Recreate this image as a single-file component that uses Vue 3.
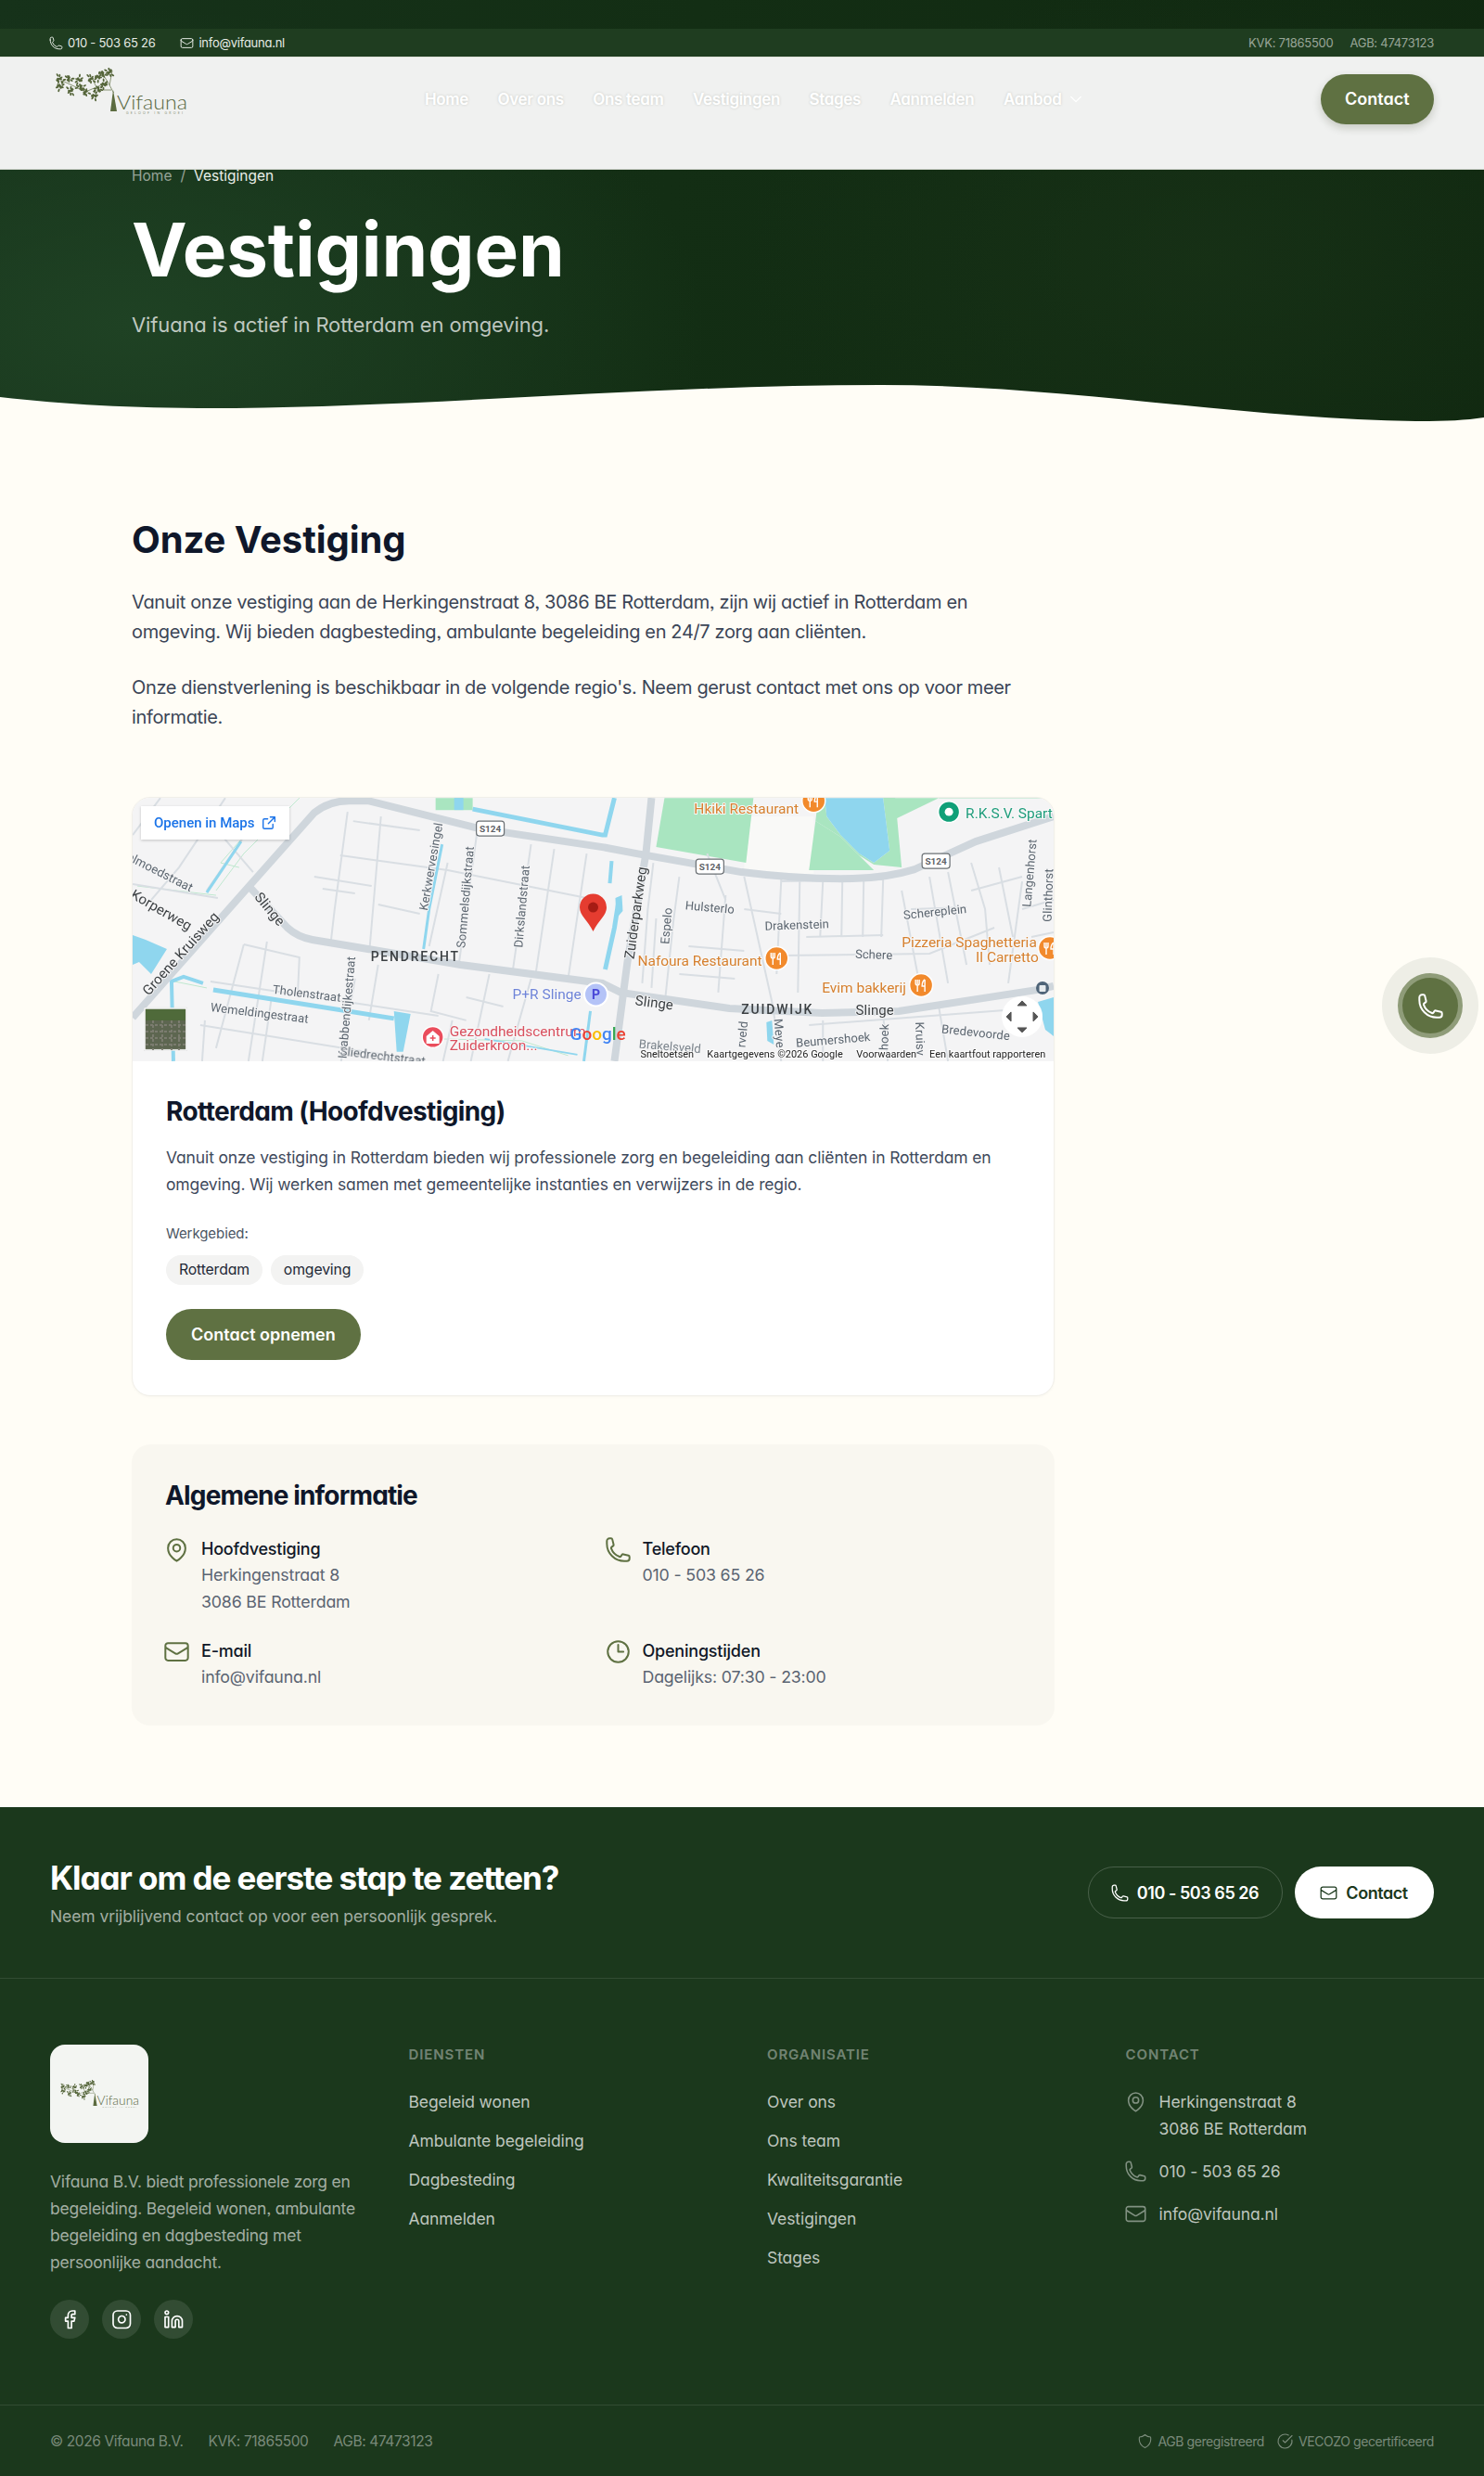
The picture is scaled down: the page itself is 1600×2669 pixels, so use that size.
<script setup>
const icons = {
  phone: 'M2.25 6.75c0 8.284 6.716 15 15 15h2.25a2.25 2.25 0 0 0 2.25-2.25v-1.372c0-.516-.351-.966-.852-1.091l-4.423-1.106c-.44-.11-.902.055-1.173.417l-.97 1.293c-.282.376-.769.542-1.21.38a12.035 12.035 0 0 1-7.143-7.143c-.162-.441.004-.928.38-1.21l1.293-.97c.363-.271.527-.734.417-1.173L6.963 3.102a1.125 1.125 0 0 0-1.091-.852H4.5A2.25 2.25 0 0 0 2.25 4.5v2.25Z',
  mail: 'M21.75 6.75v10.5a2.25 2.25 0 0 1-2.25 2.25h-15a2.25 2.25 0 0 1-2.25-2.25V6.75m19.5 0A2.25 2.25 0 0 0 19.5 4.5h-15a2.25 2.25 0 0 0-2.25 2.25m19.5 0v.243a2.25 2.25 0 0 1-1.07 1.916l-7.5 4.615a2.25 2.25 0 0 1-2.36 0L3.32 8.91a2.25 2.25 0 0 1-1.07-1.916V6.75',
  pin: 'M15 10.5a3 3 0 1 1-6 0 3 3 0 0 1 6 0ZM19.5 10.5c0 7.142-7.5 11.25-7.5 11.25S4.5 17.642 4.5 10.5a7.5 7.5 0 1 1 15 0Z',
  clock: 'M12 6v6h4.5m4.5 0a9 9 0 1 1-18 0 9 9 0 0 1 18 0Z',
  chevron: 'm19.5 8.25-7.5 7.5-7.5-7.5',
  shield: 'M12 2.7c2.2 2 5 3.2 8 3.3.2 1 .3 2 .3 3 0 5.8-3.4 10-8.3 12.3C7.1 19 3.7 14.800 3.700 9c0-1 .1-2 .3-3 3-.1 5.800-1.300 8-3.300Z',
  check: 'M21.801 10A10 10 0 1 1 17 3.335M9 11l3 3L22 4',
  facebook: 'M18 2h-3a5 5 0 0 0-5 5v3H7v4h3v8h4v-8h3l1-4h-4V7a1 1 0 0 1 1-1h3z',
  instagram: 'M7 2h10a5 5 0 0 1 5 5v10a5 5 0 0 1-5 5H7a5 5 0 0 1-5-5V7a5 5 0 0 1 5-5ZM16 11.37A4 4 0 1 1 12.63 8 4 4 0 0 1 16 11.37ZM17.5 6.500h.01',
  linkedin: 'M16 8a6 6 0 0 1 6 6v7h-4v-7a2 2 0 0 0-2-2 2 2 0 0 0-2 2v7h-4v-7a6 6 0 0 1 6-6zM2 9h4v12H2zM6 4a2 2 0 1 1-4 0 2 2 0 0 1 4 0Z',
  external: 'M14 3h7v7M21 3l-10 10M18 14v5a2 2 0 0 1-2 2H5a2 2 0 0 1-2-2V8a2 2 0 0 1 2-2h5',
}

const navLinks = ['Home', 'Over ons', 'Ons team', 'Vestigingen', 'Stages', 'Aanmelden']
const diensten = ['Begeleid wonen', 'Ambulante begeleiding', 'Dagbesteding', 'Aanmelden']
const organisatie = ['Over ons', 'Ons team', 'Kwaliteitsgarantie', 'Vestigingen', 'Stages']
const socials = ['facebook', 'instagram', 'linkedin']

// leaves of the logo tree, clustered round the branch ends
const clusters = [[24, 24], [25, 32], [34, 24], [36, 37], [45, 25], [47, 33], [58, 24], [66, 22], [71, 19], [78, 17], [72, 30], [66, 35], [52, 38], [62, 42]]
const leaves = []
clusters.forEach(([cx, cy], c) => {
  for (let i = 0; i < 10; i++) {
    const a = (i * 2.4 + c) % 6.28
    const d = 1 + (i % 4) * 1.2
    leaves.push({ x: cx + Math.cos(a) * d, y: cy + Math.sin(a) * d, r: (a * 57) | 0 })
  }
})

const mainRoads = [
  'M0 237 L124 97 L196 16 Q212 3 234 3 L254 3 L374 33 L507 53 L544 60 L657 80 Q720 88 777 87 Q815 86 844 77 L910 47 L994 20',
  'M127 97 L167 140 Q178 150 194 153 L254 163 L354 180 L507 200 L527 210 L644 227 L744 232 L827 230 L977 207 L994 203',
  'M560 0 L554 60 L534 177 L520 284',
]
const streets = [
  'M30 0 L0 40', 'M100 0 L50 75 L20 110', 'M70 10 L130 80', 'M0 93 L92 108', 'M118 45 L80 100',
  'M232 15 L218 120 L214 155', 'M268 20 L256 160', 'M224 62 L340 78 L500 110', 'M196 85 L258 95', 'M205 98 L240 103', 'M238 25 L310 35',
  'M340 70 L320 160', 'M372 35 L352 180', 'M430 50 L410 188', 'M490 60 L470 195', 'M455 55 L435 190', 'M265 115 L310 125',
  'M120 158 L90 270', 'M145 155 L125 284', 'M120 158 L180 172 L178 215', 'M84 198 L330 235', 'M78 240 L75 284', 'M73 245 L290 280', 'M150 215 L140 284', 'M265 180 L255 240', 'M240 195 L225 284',
  'M330 190 L322 230 L360 240', 'M385 190 L365 284', 'M430 195 L405 284', 'M345 240 L335 284', 'M360 215 L400 225',
  'M562 70 L556 120 L550 200', 'M590 85 L584 130 L575 215', 'M640 105 L632 210', 'M660 85 L690 220', 'M700 88 L695 190 M720 90 L718 210 M745 90 L742 150 M766 90 L765 150 M789 90 L788 150 M810 88 L808 150',
  'M700 90 L810 88', 'M660 120 L700 125', 'M700 170 L860 168 L930 140', 'M727 150 L810 148', 'M830 100 L850 205', 'M860 85 L880 200', 'M880 80 L900 180', 'M905 70 L920 120 L925 180',
  'M840 120 L900 118', 'M905 100 L960 85', 'M935 75 L950 150', 'M960 90 L945 200', 'M560 205 L565 130', 'M600 160 L660 165', 'M590 190 L650 195', 'M690 220 L700 284', 'M745 240 L745 284', 'M810 235 L815 284', 'M870 225 L880 284',
  'M730 245 L994 225', 'M960 120 L994 110', 'M970 150 L994 145', 'M620 60 L640 110',
]
const thinGreen = ['M5 95 L90 105', 'M90 100 L120 60 L180 0', 'M115 75 L95 70 L130 30', 'M330 260 L420 262 L470 278', 'M45 198 L80 205', 'M870 0 L1000 0']
const canals = [
  { d: 'M87 207 L282 238', w: 5 }, { d: 'M44 284 L42 198 L55 193 L76 200', w: 4 }, { d: 'M80 102 L117 47', w: 3 },
  { d: 'M334 50 L320 120 L314 163', w: 3 }, { d: 'M367 12 L507 40 L510 40 L520 0', w: 5 }, { d: 'M525 108 L520 140 L510 185', w: 5 },
  { d: 'M517 68 L515 92', w: 4 }, { d: 'M494 230 L487 284', w: 3 }, { d: 'M380 260 L480 277', w: 2 },
]
const waterAreas = [
  '0,148 14,153 37,163 20,190 7,177 0,180', '282,230 300,233 292,274 285,274', '347,0 357,0 357,13 347,13',
  '747,0 810,0 817,57 800,70 784,60 764,40 749,20', '521,108 528,105 529,122 522,130', '684,242 690,240 692,266 685,262', '977,220 994,215 994,257 985,250',
]
const greenAreas = [
  '574,0 670,0 662,70 565,53', '737,25 764,42 784,62 800,72 830,75 823,0 810,0 817,57 800,70 784,60 764,40 749,20 747,0 740,0', '737,25 730,78 800,78 764,42',
  '810,0 870,0 825,22', '327,0 367,0 367,13 327,13',
]
const labels = [
  { t: 'Velmoedstraat', x: 26, y: 78, r: 27, s: 13 },
  { t: 'Korperweg', x: 31, y: 121, r: 30, s: 15, c: '#3c4043' },
  { t: 'Groene Kruisweg', x: 52, y: 168, r: -48, s: 15, c: '#3c4043' },
  { t: 'Slinge', x: 148, y: 120, r: 50, s: 15, c: '#3c4043' },
  { t: 'Kerkwervesingel', x: 322, y: 74, r: -80, s: 13 },
  { t: 'Sommelsdijkstraat', x: 359, y: 107, r: -85, s: 13 },
  { t: 'Dirkslandstraat', x: 420, y: 117, r: -85, s: 13 },
  { t: 'Tholenstraat', x: 188, y: 211, r: 7, s: 13 },
  { t: 'Wemeldingestraat', x: 137, y: 232, r: 7, s: 13 },
  { t: 'Krabbendijkestraat', x: 231, y: 226, r: -85, s: 13 },
  { t: 'Sliedrechtstraat', x: 270, y: 279, r: 7, s: 13 },
  { t: 'Zuiderparkweg', x: 543, y: 124, r: -82, s: 15, c: '#3c4043' },
  { t: 'Espelo', x: 576, y: 138, r: -85, s: 13 },
  { t: 'Hulsterlo', x: 623, y: 118, r: 5, s: 13 },
  { t: 'Drakenstein', x: 717, y: 137, r: -2, s: 13 },
  { t: 'Schereplein', x: 866, y: 123, r: -6, s: 13 },
  { t: 'Langenhorst', x: 968, y: 81, r: -85, s: 13 },
  { t: 'Glinthorst', x: 988, y: 105, r: -88, s: 13 },
  { t: 'Schere', x: 800, y: 169, r: 2, s: 13 },
  { t: 'Slinge', x: 563, y: 221, r: 7, s: 15, c: '#3c4043' },
  { t: 'Slinge', x: 801, y: 229, r: 0, s: 15, c: '#3c4043' },
  { t: 'Beumershoek', x: 756, y: 261, r: -5, s: 13 },
  { t: 'Bredevoorde', x: 910, y: 253, r: 6, s: 13 },
  { t: 'Kruisv', x: 850, y: 260, r: 88, s: 13 },
  { t: 'Meye', x: 698, y: 254, r: 85, s: 13 },
  { t: 'rveld', x: 658, y: 255, r: -85, s: 13 },
  { t: 'hoek', x: 811, y: 258, r: -88, s: 13 },
]
const places = [
  { t: 'Hkiki Restaurant', x: 606, y: 12, c: '#d6802f' },
  { t: 'Nafoura Restaurant', x: 545, y: 176, c: '#d6802f' },
  { t: 'Evim bakkerij', x: 744, y: 205, c: '#d6802f' },
  { t: 'Pizzeria Spaghetteria', x: 830, y: 156, c: '#d6802f' },
  { t: 'Il Carretto', x: 910, y: 172, c: '#d6802f' },
  { t: 'P+R Slinge', x: 410, y: 212, c: '#6f84d8' },
  { t: 'Gezondheidscentrum', x: 342, y: 252, c: '#d9505f' },
  { t: 'Zuiderkroon...', x: 342, y: 267, c: '#d9505f' },
  { t: 'R.K.S.V. Spart', x: 899, y: 17, c: '#1f9d7c' },
]
const food = [[735, 3], [695, 173], [851, 202], [990, 162]]
const shields = [[386, 33], [623, 74], [867, 68]]
const attribution = [
  { t: 'Sneltoetsen', x: 548 }, { t: 'Kaartgegevens ©2026 Google', x: 620 }, { t: 'Voorwaarden', x: 781 }, { t: 'Een kaartfout rapporteren', x: 860 },
]
</script>

<template>
  <div class="page">
    <header class="hero">
      <div class="topbar">
        <div class="topbar-group">
          <span class="topbar-item"><svg class="ic ic-13" viewBox="2 2 20 20"><path :d="icons.phone" /></svg>010 - 503 65 26</span>
          <span class="topbar-item"><svg class="ic ic-13" viewBox="2 2 20 20"><path :d="icons.mail" /></svg>info@vifauna.nl</span>
        </div>
        <div class="topbar-group topbar-muted">
          <span>KVK: 71865500</span>
          <span>AGB: 47473123</span>
        </div>
      </div>

      <nav class="nav">
        <svg class="logo" viewBox="15 12 150 52">
          <path class="logo-trunk" d="M79 59 L82 36 L86 59Z" />
          <path class="logo-branch" d="M82.500 39 L76 27 L64 33 L52 38 L40 32 L27 26 M52 38 L45 30 M64 33 L60 25 M76 27 L70 18 M78 31 L81 15 M80 36 L72 36" />
          <ellipse v-for="(l, i) in leaves" :key="i" class="logo-leaf" :cx="l.x" :cy="l.y" rx="1.900" ry=".95" :transform="`rotate(${l.r} ${l.x} ${l.y})`" />
          <text class="logo-name" x="86" y="57" textLength="76" lengthAdjust="spacingAndGlyphs">Vifauna</text>
          <text class="logo-tag" x="96" y="61.500" textLength="61">GELOOF IN GROEI</text>
        </svg>
        <div class="nav-links">
          <a v-for="link in navLinks" :key="link">{{ link }}</a>
          <a class="nav-drop">Aanbod <svg class="ic ic-14" viewBox="2 2 20 20"><path :d="icons.chevron" /></svg></a>
        </div>
        <a class="nav-contact">Contact</a>
      </nav>

      <div class="hero-inner">
        <div class="crumbs"><span class="crumb-dim">Home</span><span class="crumb-dim">/</span><span>Vestigingen</span></div>
        <h1>Vestigingen</h1>
        <p class="hero-sub">Vifuana is actief in Rotterdam en omgeving.</p>
      </div>

      <svg class="wave" viewBox="0 0 1600 41" preserveAspectRatio="none">
        <path d="M0 13 C70 21 140 25 230 25 C450 25 700 0 950 0 C1150 0 1350 38 1530 39 C1560 39 1580 38 1600 35 L1600 41 L0 41Z" />
      </svg>
    </header>

    <main class="main">
      <h2>Onze Vestiging</h2>
      <p class="lead">Vanuit onze vestiging aan de Herkingenstraat 8, 3086 BE Rotterdam, zijn wij actief in Rotterdam en omgeving. Wij bieden dagbesteding, ambulante begeleiding en 24/7 zorg aan cliënten.</p>
      <p class="lead">Onze dienstverlening is beschikbaar in de volgende regio's. Neem gerust contact met ons op voor meer informatie.</p>

      <section class="card">
        <div class="map">
          <svg class="map-svg" viewBox="0 0 994 284">
            <rect width="994" height="284" fill="#f4f4f5" />
            <rect x="660" y="20" width="75" height="62" fill="#f9f9f7" />
            <polygon v-for="g in greenAreas" :key="g" :points="g" fill="#a9e5c0" />
            <path v-for="d in thinGreen" :key="d" :d="d" fill="none" stroke="#bfe8cf" stroke-width="1" />
            <path v-for="d in streets" :key="d" :d="d" fill="none" stroke="#d9dee3" stroke-width="2" />
            <polygon v-for="w in waterAreas" :key="w" :points="w" fill="#8fd6ee" />
            <path v-for="c in canals" :key="c.d" :d="c.d" fill="none" stroke="#8fd6ee" :stroke-width="c.w" />
            <path v-for="d in mainRoads" :key="d" :d="d" fill="none" stroke="#cfd6dc" stroke-width="8" />

            <g v-for="s in shields" :key="s[0]">
              <rect :x="s[0] - 15" :y="s[1] - 8" width="30" height="16" rx="3" fill="#fff" stroke="#6b7074" stroke-width="1.200" />
              <text :x="s[0]" :y="s[1] + 3.500" class="map-shield">S124</text>
            </g>

            <text v-for="(l, i) in labels" :key="i" class="map-label" :x="l.x" :y="l.y" :font-size="l.s" :fill="l.c || '#5c6670'" :transform="`rotate(${l.r} ${l.x} ${l.y})`">{{ l.t }}</text>
            <text class="map-area" x="305" y="171">PENDRECHT</text>
            <text class="map-area" x="696" y="228">ZUIDWIJK</text>
            <text class="map-label" x="580" y="268" font-size="13" fill="#7a838b" transform="rotate(5 580 268)">Brakelsveld</text>

            <text v-for="p in places" :key="p.t" class="map-place" :x="p.x" :y="p.y" :fill="p.c">{{ p.t }}</text>

            <g v-for="f in food" :key="f[0]">
              <circle :cx="f[0]" :cy="f[1]" r="12.500" fill="#f28a2c" stroke="#fff" stroke-width="1.500" />
              <path :d="`M${f[0] - 4} ${f[1] - 6}v5m-2 -5v4q0 2 2 2t2 -2v-4m-2 6v7M${f[0] + 4} ${f[1] - 6}v13m0 -13q-3 2 -3 7h3`" fill="none" stroke="#fff" stroke-width="1.400" />
            </g>
            <circle cx="881" cy="15" r="11.500" fill="#10a078" stroke="#fff" stroke-width="1.500" />
            <circle cx="881" cy="15" r="4.500" fill="#fff" />
            <circle cx="324" cy="258" r="11.500" fill="#ea4d5c" stroke="#fff" stroke-width="1.500" />
            <path d="M324 251 L331 257 V265 H317 V257Z" fill="#fff" />
            <path d="M324 256v6m-3 -3h6" stroke="#ea4d5c" stroke-width="1.500" />
            <circle cx="500" cy="212" r="12.500" fill="#b4c3f7" stroke="#fff" stroke-width="2" />
            <text class="map-p" x="500" y="217">P</text>
            <circle cx="982" cy="205" r="7" fill="#4f6478" />
            <rect x="978.500" y="202" width="7" height="7" rx="1" fill="#e7ebee" />

            <path d="M497 144 C491 132 482.500 127 482.500 118 A14.500 14.500 0 0 1 511.500 118 C511.500 127 503 132 497 144Z" fill="#e53c30" />
            <circle cx="497" cy="118" r="5.500" fill="#a61c14" />

            <text class="map-google" x="472" y="261"><tspan fill="#4285f4">G</tspan><tspan fill="#ea4335">o</tspan><tspan fill="#fbbc05">o</tspan><tspan fill="#4285f4">g</tspan><tspan fill="#34a853">l</tspan><tspan fill="#ea4335">e</tspan></text>
            <text v-for="a in attribution" :key="a.t" class="map-attr" :x="a.x" y="280">{{ a.t }}</text>

            <rect x="12" y="226" width="47" height="47" fill="#000" opacity=".18" />
            <rect x="13" y="227" width="45" height="45" fill="#5d6650" stroke="#fff" stroke-width="1.500" />
            <rect x="14" y="228" width="43" height="12" fill="#4f6a3a" />
            <path d="M14 245h43M14 252h43M14 259h43M14 266h43M22 240v32M32 240v32M42 240v32M50 240v32" stroke="#7c7d70" stroke-width="2" stroke-dasharray="3 2" />

            <circle cx="960" cy="236" r="22" fill="#fff" />
            <path d="M955 224 L960 219 L965 224Z M955 248 L960 253 L965 248Z M948 231 L943 236 L948 241Z M972 231 L977 236 L972 241Z" fill="#555" stroke="#555" stroke-linejoin="round" />
          </svg>
          <a class="map-open">Openen in Maps <svg class="ic ic-16" viewBox="2 2 20 20"><path :d="icons.external" /></svg></a>
        </div>
        <div class="card-body">
          <h3>Rotterdam (Hoofdvestiging)</h3>
          <p class="card-text">Vanuit onze vestiging in Rotterdam bieden wij professionele zorg en begeleiding aan cliënten in Rotterdam en omgeving. Wij werken samen met gemeentelijke instanties en verwijzers in de regio.</p>
          <div class="card-label">Werkgebied:</div>
          <div class="pills"><span>Rotterdam</span><span>omgeving</span></div>
          <a class="btn-green">Contact opnemen</a>
        </div>
      </section>

      <section class="info">
        <h3>Algemene informatie</h3>
        <div class="info-grid">
          <div class="info-item">
            <svg class="ic ic-25" viewBox="2 2 20 20"><path :d="icons.pin" /></svg>
            <div><strong>Hoofdvestiging</strong><p>Herkingenstraat 8<br />3086 BE Rotterdam</p></div>
          </div>
          <div class="info-item">
            <svg class="ic ic-25" viewBox="2 2 20 20"><path :d="icons.phone" /></svg>
            <div><strong>Telefoon</strong><p>010 - 503 65 26</p></div>
          </div>
          <div class="info-item">
            <svg class="ic ic-25" viewBox="2 2 20 20"><path :d="icons.mail" /></svg>
            <div><strong>E-mail</strong><p>info@vifauna.nl</p></div>
          </div>
          <div class="info-item">
            <svg class="ic ic-25" viewBox="2 2 20 20"><path :d="icons.clock" /></svg>
            <div><strong>Openingstijden</strong><p>Dagelijks: 07:30 - 23:00</p></div>
          </div>
        </div>
      </section>
    </main>

    <footer class="footer">
      <div class="cta">
        <div>
          <h2>Klaar om de eerste stap te zetten?</h2>
          <p>Neem vrijblijvend contact op voor een persoonlijk gesprek.</p>
        </div>
        <div class="cta-btns">
          <a class="btn-outline"><svg class="ic ic-17" viewBox="2 2 20 20"><path :d="icons.phone" /></svg>010 - 503 65 26</a>
          <a class="btn-white"><svg class="ic ic-17" viewBox="2 2 20 20"><path :d="icons.mail" /></svg>Contact</a>
        </div>
      </div>

      <div class="foot-grid">
        <div>
          <div class="foot-logo">
            <svg class="logo-small" viewBox="15 12 150 52">
              <path class="logo-trunk" d="M79 59 L82 36 L86 59Z" />
              <path class="logo-branch" d="M82.500 39 L76 27 L64 33 L52 38 L40 32 L27 26 M52 38 L45 30 M64 33 L60 25 M76 27 L70 18 M78 31 L81 15 M80 36 L72 36" />
              <ellipse v-for="(l, i) in leaves" :key="i" class="logo-leaf" :cx="l.x" :cy="l.y" rx="1.900" ry=".95" :transform="`rotate(${l.r} ${l.x} ${l.y})`" />
              <text class="logo-name" x="86" y="57" textLength="76" lengthAdjust="spacingAndGlyphs">Vifauna</text>
              <text class="logo-tag" x="96" y="61.500" textLength="61">GELOOF IN GROEI</text>
            </svg>
          </div>
          <p class="foot-about">Vifauna B.V. biedt professionele zorg en begeleiding. Begeleid wonen, ambulante begeleiding en dagbesteding met persoonlijke aandacht.</p>
          <div class="socials">
            <a v-for="s in socials" :key="s"><svg class="ic ic-social" viewBox="2 2 20 20"><path :d="icons[s]" /></svg></a>
          </div>
        </div>
        <div>
          <h4>Diensten</h4>
          <a v-for="d in diensten" :key="d" class="foot-link">{{ d }}</a>
        </div>
        <div>
          <h4>Organisatie</h4>
          <a v-for="o in organisatie" :key="o" class="foot-link">{{ o }}</a>
        </div>
        <div>
          <h4>Contact</h4>
          <div class="foot-contact"><svg class="ic ic-21" viewBox="2 2 20 20"><path :d="icons.pin" /></svg><span>Herkingenstraat 8<br />3086 BE Rotterdam</span></div>
          <div class="foot-contact"><svg class="ic ic-21" viewBox="2 2 20 20"><path :d="icons.phone" /></svg><span>010 - 503 65 26</span></div>
          <div class="foot-contact"><svg class="ic ic-21" viewBox="2 2 20 20"><path :d="icons.mail" /></svg><span>info@vifauna.nl</span></div>
        </div>
      </div>

      <div class="foot-bottom">
        <div class="foot-legal"><span>© 2026 Vifauna B.V.</span><span>KVK: 71865500</span><span>AGB: 47473123</span></div>
        <div class="foot-badges">
          <span><svg class="ic ic-15" viewBox="2 2 20 20"><path :d="icons.shield" /></svg>AGB geregistreerd</span>
          <span><svg class="ic ic-15" viewBox="2 2 20 20"><path :d="icons.check" /></svg>VECOZO gecertificeerd</span>
        </div>
      </div>
    </footer>

    <a class="float-call"><svg class="ic ic-25" viewBox="2 2 20 20"><path :d="icons.phone" /></svg></a>
  </div>
</template>

<style>
body {
  background: #fffdf6;
}
</style>

<style scoped>
.page {
  position: relative;
  width: 1600px;
  font-family: Inter, "Noto Sans", sans-serif;
  font-feature-settings: 'cv11', 'ss03';
  color: #111827;
  background: #fffdf6;
}

a { display: inline-block; }

h1, h2, h3, h4, p { margin: 0; }

.ic {
  flex: none;
  overflow: visible;
  fill: none;
  stroke: currentColor;
  stroke-width: 1.5;
  stroke-linecap: round;
  stroke-linejoin: round;
}
.ic-13 { width: 13px; height: 13px; }
.ic-14 { width: 14px; height: 14px; stroke-width: 2; }
.ic-15 { width: 15px; height: 15px; }
.ic-16 { width: 14px; height: 14px; stroke-width: 2; }
.ic-17 { width: 17px; height: 17px; }
.ic-21 { width: 21px; height: 21px; }
.ic-25 { width: 25px; height: 25px; stroke-width: 1.6; }
.ic-social { width: 18.500px; height: 18.500px; stroke-width: 1.800; }

/* hero + header */
.hero {
  position: relative;
  height: 456px;
  padding-top: 31px;
  box-sizing: border-box;
  background:
    radial-gradient(ellipse 620px 340px at 140px 350px, #1f4224, transparent),
    radial-gradient(ellipse 500px 300px at 1300px 280px, #1c361a80, transparent),
    linear-gradient(100deg, #16321a 0%, #132e14 45%, #102810 100%);
}

.topbar {
  display: flex;
  justify-content: space-between;
  align-items: center;
  height: 30px;
  padding: 0 54px;
  background: #1f3d20;
  color: #fff;
  font-size: 13px;
  letter-spacing: -.02em;
}
.topbar-group { display: flex; gap: 18px; }
.topbar-muted { color: rgba(255, 255, 255, .55); }
.topbar-item { display: flex; align-items: center; gap: 6px; color: #e6ebe5; }
.topbar-item + .topbar-item { margin-left: 10px; }

.nav {
  display: flex;
  justify-content: space-between;
  align-items: flex-start;
  height: 122px;
  padding: 18px 54px 0;
  box-sizing: border-box;
  background: #f0f1f0;
  border-top: 1px solid #dfe3da;
  border-bottom: 1px solid #cfd4cb;
}
.logo { width: 150px; height: 52px; margin-top: -7px; margin-left: 1px; }
.logo-small { width: 90px; height: 31px; }
.logo-trunk { fill: #5b6b3f; }
.logo-branch { fill: none; stroke: #5b6b3f; stroke-width: .7; }
.logo-leaf { fill: #55653a; }
.logo-name { font-family: Lato, sans-serif; font-weight: 300; font-size: 22px; fill: #59683f; }
.logo-tag { font-family: Lato, sans-serif; font-size: 3.5px; fill: #8a9378; }

.nav-links {
  position: absolute;
  left: 458px;
  top: 97px;
  display: flex;
  gap: 31.500px;
  color: #fff;
  font-size: 17px;
  font-weight: 600;
  letter-spacing: -.02em;
  text-shadow: 0 0 3px rgba(60, 70, 50, .22);
}
.nav-drop { display: flex; align-items: center; gap: 8px; }
.nav-contact {
  padding: 0 26.500px;
  height: 54px;
  line-height: 54px;
  border-radius: 27px;
  background: #5f7142;
  color: #fff;
  font-size: 18px;
  font-weight: 600;
  box-shadow: 0 4px 10px rgba(30, 40, 10, .2);
}

.hero-inner { padding: 0 142px; }
.crumbs {
  display: flex;
  gap: 9px;
  height: 13px;
  line-height: 13px;
  font-size: 15.500px;
  letter-spacing: 0;
  color: #e9eee8;
}
.crumb-dim { color: rgba(255, 255, 255, .55); }
h1 {
  margin-top: 25px;
  color: #fff;
  font-size: 80px;
  line-height: 96px;
  font-weight: 700;
  letter-spacing: -.002em;
}
.hero-sub {
  margin-top: 17px;
  color: rgba(255, 255, 255, .72);
  font-size: 22px;
  line-height: 32px;
  letter-spacing: -.006em;
}
.wave { position: absolute; left: 0; bottom: 0; width: 1600px; height: 41px; display: block; }
.wave path { fill: #fffdf6; }

/* main column */
.main { padding: 102px 463px 88px 142px; }
.main h2 {
  color: #0f172a;
  font-size: 40px;
  line-height: 48px;
  font-weight: 700;
  letter-spacing: -.002em;
}
.lead {
  margin-top: 27px;
  color: #3b4556;
  font-size: 20px;
  line-height: 32px;
  letter-spacing: -.018em;
}
.lead + .lead { margin-top: 28px; }

.card {
  margin-top: 70px;
  border: 1px solid #f1efe9;
  border-radius: 20px;
  background: #fff;
  overflow: hidden;
  box-shadow: 0 1px 3px rgba(0, 0, 0, .03);
}
.map { position: relative; height: 284px; overflow: hidden; }
.map-svg { display: block; width: 100%; height: 284px; filter: blur(.35px); font-family: Roboto, sans-serif; font-feature-settings: normal; }
.map-label { text-anchor: middle; dominant-baseline: central; letter-spacing: .1px; paint-order: stroke; stroke: #f4f4f5; stroke-width: 2px; }
.map-area { text-anchor: middle; dominant-baseline: central; font-size: 14px; font-weight: 500; letter-spacing: 1.800px; fill: #3c4043; }
.map-place { dominant-baseline: central; font-size: 15.500px; paint-order: stroke; stroke: #f8f8f8; stroke-width: 2px; }
.map-shield { text-anchor: middle; font-size: 10px; font-weight: 700; fill: #5f6368; }
.map-p { text-anchor: middle; font-size: 14px; font-weight: 700; fill: #4a49d8; }
.map-google { font-size: 19px; font-weight: 500; }
.map-attr { font-size: 11px; fill: #222; paint-order: stroke; stroke: rgba(255, 255, 255, .8); stroke-width: 2px; }
.map-open {
  position: absolute;
  left: 9px;
  top: 9px;
  display: flex;
  align-items: center;
  gap: 8px;
  height: 36px;
  padding: 0 15px 0 14px;
  background: #fff;
  color: #1a73e8;
  font-family: Roboto, sans-serif;
  font-feature-settings: normal;
  font-size: 15px;
  font-weight: 500;
  box-shadow: 0 1px 3px rgba(0, 0, 0, .2);
}

.card-body { padding: 36px 35px 38px 36px; }
.card-body h3, .info h3 {
  color: #0f172a;
  font-size: 28px;
  line-height: 36px;
  font-weight: 700;
  letter-spacing: -.022em;
}
.card-text {
  margin-top: 17px;
  color: #3f4a5c;
  font-size: 17.500px;
  line-height: 29px;
  letter-spacing: -.008em;
}
.card-label {
  margin-top: 28px;
  color: #4b5563;
  font-size: 15px;
  line-height: 22px;
  letter-spacing: -.005em;
}
.pills { display: flex; gap: 9px; margin-top: 12px; }
.pills span {
  height: 32px;
  line-height: 32px;
  padding: 0 14px;
  border-radius: 16px;
  background: #f3f3f2;
  color: #1f2937;
  font-size: 15.800px;
  letter-spacing: -.01em;
}
.btn-green {
  margin-top: 26px;
  height: 55px;
  line-height: 55px;
  padding: 0 27px;
  border-radius: 28px;
  background: #5f7142;
  color: #fff;
  font-size: 18px;
  font-weight: 600;
}

.info {
  margin-top: 52px;
  padding: 37px 36px 38px;
  border-radius: 20px;
  background: #f9f7f0;
}
.info h3 { letter-spacing: -.03em; }
.info-grid {
  display: grid;
  grid-template-columns: 1fr 1fr;
  column-gap: 28px;
  row-gap: 26px;
  margin-top: 27px;
}
.info-item { display: flex; gap: 14px; color: #5f7142; }
.info-item .ic { margin-top: 1px; }
.info-item strong {
  display: block;
  color: #111827;
  font-size: 18px;
  line-height: 26px;
  font-weight: 500;
  letter-spacing: -.012em;
}
.info-item p {
  color: #5b6472;
  font-size: 17.800px;
  line-height: 29px;
  letter-spacing: -.01em;
}

/* footer */
.footer { background: #1b381c; color: #fff; }
.cta {
  display: flex;
  justify-content: space-between;
  align-items: center;
  height: 185px;
  padding: 0 54px;
  box-sizing: border-box;
  border-bottom: 1px solid rgba(255, 255, 255, .1);
}
.cta h2 {
  font-size: 35px;
  line-height: 44px;
  font-weight: 700;
  letter-spacing: -.03em;
}
.cta p {
  margin-top: 7px;
  color: rgba(255, 255, 255, .6);
  font-size: 17.500px;
  line-height: 26px;
  letter-spacing: -.005em;
}
.cta-btns { display: flex; gap: 13px; }
.btn-outline, .btn-white {
  display: flex;
  align-items: center;
  justify-content: center;
  gap: 10px;
  height: 56px;
  border-radius: 28px;
  box-sizing: border-box;
  font-size: 18px;
  font-weight: 600;
  letter-spacing: -.025em;
}
.btn-outline { width: 210px; border: 1px solid rgba(255, 255, 255, .2); }
.btn-white { width: 150px; background: #fff; color: #1b381c; }

.foot-grid {
  display: grid;
  grid-template-columns: repeat(4, 332.500px);
  column-gap: 54px;
  height: 460px;
  padding: 71px 54px 0;
  box-sizing: border-box;
  border-bottom: 1px solid rgba(255, 255, 255, .1);
}
.foot-logo {
  display: flex;
  align-items: center;
  justify-content: center;
  width: 106px;
  height: 106px;
  border-radius: 16px;
  background: #f3f5f2;
}
.foot-about {
  margin-top: 27px;
  color: rgba(255, 255, 255, .6);
  font-size: 17.500px;
  line-height: 29px;
  letter-spacing: -.012em;
}
.socials { display: flex; gap: 14px; margin-top: 26px; }
.socials a {
  display: flex;
  align-items: center;
  justify-content: center;
  width: 42px;
  height: 42px;
  border-radius: 50%;
  background: rgba(255, 255, 255, .1);
}
.foot-grid h4 {
  color: rgba(255, 255, 255, .4);
  font-size: 15px;
  line-height: 22px;
  font-weight: 600;
  letter-spacing: .06em;
  text-transform: uppercase;
}
.foot-link {
  display: block;
  margin-top: 13.800px;
  color: rgba(255, 255, 255, .72);
  font-size: 17.500px;
  line-height: 28.200px;
  letter-spacing: -.005em;
}
.foot-link:first-of-type { margin-top: 26px; }
.foot-contact {
  display: flex;
  gap: 15px;
  margin-top: 17px;
  color: rgba(255, 255, 255, .45);
}
.foot-contact .ic { margin-top: 4px; }
h4 + .foot-contact { margin-top: 25px; }
.foot-contact span {
  color: rgba(255, 255, 255, .72);
  font-size: 17.500px;
  line-height: 29px;
  letter-spacing: -.005em;
}

.foot-bottom {
  display: flex;
  justify-content: space-between;
  align-items: center;
  height: 76px;
  padding: 0 54px;
  color: rgba(255, 255, 255, .42);
  font-size: 15.500px;
  letter-spacing: -.025em;
}
.foot-legal { display: flex; gap: 27px; }
.foot-badges { display: flex; gap: 15px; font-size: 14px; letter-spacing: -.03em; }
.foot-badges span { display: flex; align-items: center; gap: 7px; }

.float-call {
  position: absolute;
  left: 1507px;
  top: 1049px;
  display: flex;
  align-items: center;
  justify-content: center;
  width: 70px;
  height: 70px;
  box-sizing: border-box;
  border-radius: 50%;
  background: #5f7142;
  border: 5px solid #8f9c79;
  background-clip: border-box;
  color: #fff;
  box-shadow: 0 0 0 17px #eeeee6;
}
</style>
